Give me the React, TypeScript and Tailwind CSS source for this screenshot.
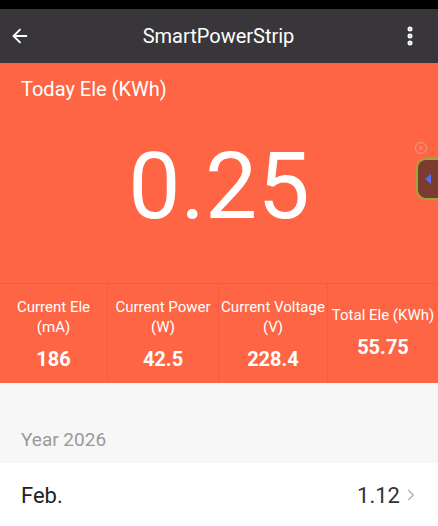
import React from "react";
import { ArrowLeft, EllipsisVertical, ChevronRight } from "lucide-react";

const stats = [
  { label: "Current Ele", unit: "(mA)", value: "186" },
  { label: "Current Power", unit: "(W)", value: "42.5" },
  { label: "Current Voltage", unit: "(V)", value: "228.4" },
  { label: "Total Ele (KWh)", unit: "", value: "55.75" },
];

export default function App() {
  return (
    <div
      className="relative w-[438px] h-[526px] overflow-hidden bg-white"
      style={{ fontFamily: "Roboto, 'Noto Sans', sans-serif" }}
    >
      {/* status bar */}
      <div className="h-[9px] bg-black" />

      {/* header */}
      <div className="h-[54px] bg-[#38363a] flex items-center justify-between pl-[9px] pr-[16px] text-white">
        <ArrowLeft size={22} strokeWidth={2} />
        <span className="text-[20px] ml-[8px]">SmartPowerStrip</span>
        <EllipsisVertical size={24} strokeWidth={3} />
      </div>

      {/* today */}
      <div className="bg-[#fe6544] text-white">
        <div className="h-[220px] flex flex-col">
          <div className="pl-[21px] pt-[14px] text-[20px] leading-6">
            Today Ele (KWh)
          </div>
          <div className="flex-1 flex items-center justify-center pb-[12px]">
            <span className="text-[93px] leading-none font-normal">0.25</span>
          </div>
        </div>

        <div className="grid grid-cols-[108px_111px_109px_1fr] border-t border-[#f15d3d] h-[100px]">
          {stats.map((s, i) => (
            <div
              key={s.label}
              className={`flex flex-col items-center justify-center ${
                i < 3 ? "border-r border-[#f15d3d]" : "pb-[4px]"
              }`}
            >
              <div className="text-[15px] leading-[20px] text-center whitespace-nowrap">
                {s.label}
                {s.unit && <div>{s.unit}</div>}
              </div>
              <div className="text-[20px] font-bold mt-[10px] leading-6">
                {s.value}
              </div>
            </div>
          ))}
        </div>
      </div>

      {/* year */}
      <div className="bg-[#f7f7f7] h-[80px] flex items-end pl-[21px] pb-[9px]">
        <span className="text-[19px] text-[#9a9a9a]">Year 2026</span>
      </div>

      {/* month row */}
      <div className="flex items-center justify-between pl-[21px] pr-[18px] h-[64px]">
        <span className="text-[22px] text-[#222]">Feb.</span>
        <div className="flex items-center gap-[2px]">
          <span className="text-[22px] text-[#333]">1.12</span>
          <ChevronRight size={18} className="text-[#b5b5b5]" />
        </div>
      </div>

      {/* floating assistant tab */}
      <div className="absolute right-[11px] top-[142px] w-[12px] h-[12px] rounded-full border border-[#f0a090] flex items-center justify-center text-[#f0a090] text-[9px] leading-none">
        ×
      </div>
      <div className="absolute right-0 top-[158px] w-[22px] h-[42px] rounded-l-[10px] bg-[#7b3b2e] border-2 border-r-0 border-[#9aa83a] flex items-center justify-center">
        <div className="w-0 h-0 border-y-[5px] border-y-transparent border-r-[6px] border-r-[#5a6cf0]" />
      </div>
    </div>
  );
}
